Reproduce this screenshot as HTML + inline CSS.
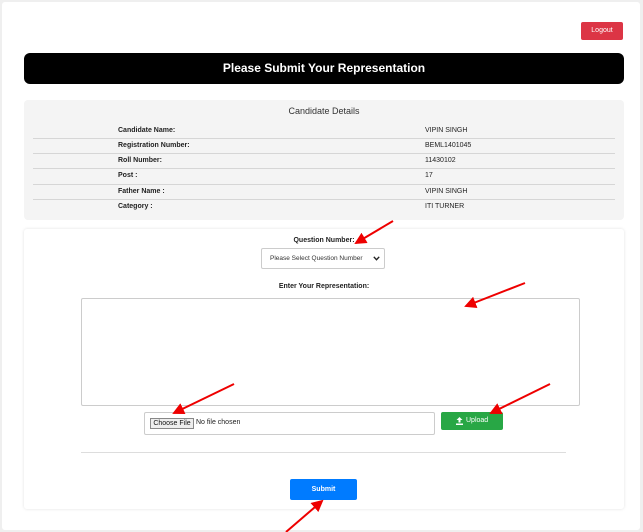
<!DOCTYPE html>
<html><head><meta charset="utf-8"><style>
*{box-sizing:border-box;margin:0;padding:0}
body{width:643px;height:532px;background:#efefef;font-family:"Liberation Sans",Arial,sans-serif;position:relative;overflow:hidden}
.a{position:absolute}
.card{left:2px;top:2px;width:638px;height:528px;background:#fff;border-radius:3px}
.lbl{font-size:7px;font-weight:bold;color:#222}
.val{font-size:7px;color:#222}
.ln{left:33px;width:582px;height:1px;background:#d6d6d6}
</style></head><body>
<div class="a card"></div>
<div class="a" style="left:581px;top:22px;width:42px;height:18px;background:#dc3545;border-radius:2px;color:#fff;font-size:7px;text-align:center;line-height:18px">Logout</div>
<div class="a" style="left:24px;top:53px;width:600px;height:31px;background:#000;border-radius:6px;color:#fff;font-size:12px;font-weight:bold;text-align:center;line-height:31px">Please Submit Your Representation</div>
<div class="a" style="left:24px;top:100px;width:600px;height:120px;background:#f4f4f4;border-radius:4px"></div>
<div class="a" style="left:24px;top:106px;width:600px;text-align:center;font-size:9px;color:#333">Candidate Details</div>
<div class="a ln" style="top:138px"></div><div class="a ln" style="top:153px"></div><div class="a ln" style="top:168px"></div><div class="a ln" style="top:184px"></div><div class="a ln" style="top:199px"></div>
<div class="a lbl" style="left:118px;top:127px">Candidate Name:</div><div class="a val" style="left:425px;top:127px">VIPIN SINGH</div>
<div class="a lbl" style="left:118px;top:142px">Registration Number:</div><div class="a val" style="left:425px;top:142px">BEML1401045</div>
<div class="a lbl" style="left:118px;top:157px">Roll Number:</div><div class="a val" style="left:425px;top:157px">11430102</div>
<div class="a lbl" style="left:118px;top:172px">Post :</div><div class="a val" style="left:425px;top:172px">17</div>
<div class="a lbl" style="left:118px;top:188px">Father Name :</div><div class="a val" style="left:425px;top:188px">VIPIN SINGH</div>
<div class="a lbl" style="left:118px;top:203px">Category :</div><div class="a val" style="left:425px;top:203px">ITI TURNER</div>
<div class="a" style="left:24px;top:229px;width:600px;height:280px;background:#fff;box-shadow:0 0 3px rgba(0,0,0,.12);border-radius:3px"></div>
<div class="a lbl" style="left:24px;top:237px;width:600px;text-align:center">Question Number:</div>
<div class="a" style="left:261px;top:248px;width:124px;height:21px;border:1px solid #ccc;border-radius:2px;font-size:6.5px;color:#333;line-height:19px;padding-left:8px">Please Select Question Number<svg style="position:absolute;right:4px;top:7px" width="7" height="5"><path d="M0.8 0.8 L3.5 3.7 L6.2 0.8" stroke="#222" stroke-width="1.4" fill="none"/></svg></div>
<div class="a lbl" style="left:24px;top:283px;width:600px;text-align:center">Enter Your Representation:</div>
<div class="a" style="left:81px;top:298px;width:499px;height:108px;border:1px solid #ccc;border-radius:2px"></div>
<div class="a" style="left:144px;top:412px;width:291px;height:23px;border:1px solid #ccc;border-radius:2px"></div>
<div class="a" style="left:150px;top:418px;width:44px;height:11px;border:1px solid #888;background:#eee;font-size:7px;line-height:9px;text-align:center;color:#111">Choose File</div>
<div class="a val" style="left:196px;top:419px">No file chosen</div>
<div class="a" style="left:441px;top:412px;width:62px;height:18px;background:#28a745;border-radius:2px;color:#fff;font-size:7px;line-height:18px;padding-left:16px"><svg style="position:absolute;left:15px;top:5px" width="7" height="8"><path d="M3.5 0 L0.5 3 L2.5 3 L2.5 5.5 L4.5 5.5 L4.5 3 L6.5 3Z M0 6.5 H7 V8 H0Z" fill="#fff"/></svg><span style="margin-left:9px">Upload</span></div>
<div class="a" style="left:81px;top:452px;width:485px;height:1px;background:#ddd"></div>
<div class="a" style="left:290px;top:479px;width:67px;height:21px;background:#007bff;border-radius:2px;color:#fff;font-size:7px;font-weight:bold;text-align:center;line-height:21px">Submit</div>
<svg class="a" style="left:0;top:0" width="643" height="532">
<defs><marker id="m" markerWidth="6" markerHeight="6" refX="5" refY="3" orient="auto"><path d="M0,0 L6,3 L0,6z" fill="#e00"/></marker></defs>
<g stroke="#e00" stroke-width="2" marker-end="url(#m)">
<line x1="393" y1="221" x2="356" y2="243"/>
<line x1="525" y1="283" x2="466" y2="306"/>
<line x1="234" y1="384" x2="174" y2="413"/>
<line x1="550" y1="384" x2="491" y2="413"/>
<line x1="286" y1="532" x2="322" y2="501"/>
</g></svg>
</body></html>
